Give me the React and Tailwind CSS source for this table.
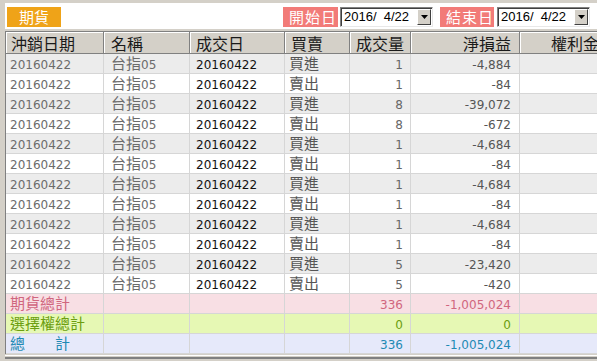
import React from 'react';

const cjk = '[font-family:"Noto_Sans_CJK_TC","Noto_Sans_CJK_SC",sans-serif]';
const num = '[font-family:"DejaVu_Sans",Verdana,sans-serif] text-[12px] leading-none';

const cols = [
  { w: 'w-[98px]', head: 'pl-[5px] justify-start', cell: 'pl-[4px] text-left' },
  { w: 'w-[86px]', head: 'pl-[7px] justify-start', cell: 'pl-[7px] text-left' },
  { w: 'w-[95px]', head: 'pl-[6px] justify-start', cell: 'pl-[6px] text-left' },
  { w: 'w-[65px]', head: 'pl-[6px] justify-start', cell: 'pl-[4px] text-left' },
  { w: 'w-[61px]', head: 'pl-[6px] justify-start', cell: 'pr-[7px] text-right' },
  { w: 'w-[109px]', head: 'pr-[8px] justify-end', cell: 'pr-[8px] text-right' },
  { w: 'w-[88px]', head: 'pr-[8px] justify-end', cell: 'pr-[8px] text-right' },
];

const headers = ['沖銷日期', '名稱', '成交日', '買賣', '成交量', '淨損益', '權利金'];

const trades = [
  ['買進', '1', '-4,884'],
  ['賣出', '1', '-84'],
  ['買進', '8', '-39,072'],
  ['賣出', '8', '-672'],
  ['買進', '1', '-4,684'],
  ['賣出', '1', '-84'],
  ['買進', '1', '-4,684'],
  ['賣出', '1', '-84'],
  ['買進', '1', '-4,684'],
  ['賣出', '1', '-84'],
  ['買進', '5', '-23,420'],
  ['賣出', '5', '-420'],
];

const totals = [
  { label: '期貨總計', qty: '336', pnl: '-1,005,024', bg: 'bg-[#f8dfe4]', fg: 'text-[#d0667e]' },
  { label: '選擇權總計', qty: '0', pnl: '0', bg: 'bg-[#e6f8b4]', fg: 'text-[#6c9e10]' },
  { label: '總　　計', qty: '336', pnl: '-1,005,024', bg: 'bg-[#e6e9fa]', fg: 'text-[#1f8ab4]' },
];

// cells share one CJK strut so digits and hanzi sit on the same baseline
const Cell = ({ i, className = '', children }) => (
  <div className={`${cols[i].w} ${cols[i].cell} shrink-0 h-full text-[15px] leading-[17px] border-r border-[#d6d6d6] whitespace-pre ${className}`}>
    {children}
  </div>
);

const N = ({ children }) => <span className={num}>{children}</span>;

const DateBox = () => (
  <div className="w-[93px] h-[20px] bg-white flex items-center border border-t-[#808080] border-l-[#808080] border-r-[#e8e8e8] border-b-[#e8e8e8] shadow-[inset_1px_1px_0_#404040]">
    <span className="pl-[3px] flex-1 text-[13px] leading-[16px] text-black whitespace-pre [font-family:'Liberation_Sans',Arial,sans-serif]">2016/  4/22</span>
    <div className="w-[14px] h-[16px] mr-[1px] bg-[#d4d0c8] flex items-center justify-center border border-t-white border-l-white border-r-[#404040] border-b-[#404040]">
      <svg width="7" height="4" viewBox="0 0 7 4"><path d="M0 0h7L3.5 4z" fill="#000" /></svg>
    </div>
  </div>
);

export default function App() {
  return (
    <div className={`w-[597px] h-[361px] overflow-hidden bg-[#d4d0c8] pt-[3px] pl-[5px] ${cjk}`}>
      <div className="h-[26px] bg-white flex items-start pt-[4px] pl-[2px]">
        <div className="w-[54px] h-[20px] bg-[#efa318] text-white text-[15px] leading-[20px] pl-[12px]">期貨</div>
        <div className="w-[55px] h-[20px] ml-[222px] bg-[#f27b78] text-white text-[15px] leading-[20px] pl-[6px] tracking-[1px]">開始日</div>
        <div className="ml-[2px]"><DateBox /></div>
        <div className="w-[54px] h-[20px] ml-[7px] bg-[#f27b78] text-white text-[15px] leading-[20px] pl-[6px] tracking-[1px]">結束日</div>
        <div className="ml-[3px]"><DateBox /></div>
      </div>

      <div className="mt-[2px] border-l border-t border-[#808080] w-[620px]">
        <div className="flex h-[22px] bg-[#d4d0c8] border-b border-[#808080]">
          {headers.map((h, i) => (
            <div
              key={h}
              className={`${cols[i].w} ${cols[i].head} shrink-0 h-full flex items-center leading-[20px] border-r border-[#808080] shadow-[inset_1px_1px_0_#ffffff] text-[16px] text-[#1a1a1a]`}
            >
              {h}
            </div>
          ))}
        </div>

        {trades.map((t, r) => (
          <div key={r} className={`flex h-[20px] border-b border-[#d6d6d6] ${r % 2 === 0 ? 'bg-[#ececec]' : 'bg-white'}`}>
            <Cell i={0} className="text-[#6b6b6b]"><N>20160422</N></Cell>
            <Cell i={1} className="text-[#6b6b6b]">台指<N>05</N></Cell>
            <Cell i={2} className="text-[#111]"><N>20160422</N></Cell>
            <Cell i={3} className="text-[#555]">{t[0]}</Cell>
            <Cell i={4} className="text-[#666]"><N>{t[1]}</N></Cell>
            <Cell i={5} className="text-[#555]"><N>{t[2]}</N></Cell>
            <Cell i={6} />
          </div>
        ))}

        {totals.map((t) => (
          <div key={t.label} className={`flex h-[20px] border-b border-[#d6d6d6] ${t.bg}`}>
            <Cell i={0} className={t.fg}>{t.label}</Cell>
            <Cell i={1} />
            <Cell i={2} />
            <Cell i={3} />
            <Cell i={4} className={t.fg}><N>{t.qty}</N></Cell>
            <Cell i={5} className={t.fg}><N>{t.pnl}</N></Cell>
            <Cell i={6} />
          </div>
        ))}
      </div>
      <div className="h-[1px] bg-white mt-[1px]" />
      <div className="h-[2px] mt-[1px] bg-[#808080]" />
    </div>
  );
}
